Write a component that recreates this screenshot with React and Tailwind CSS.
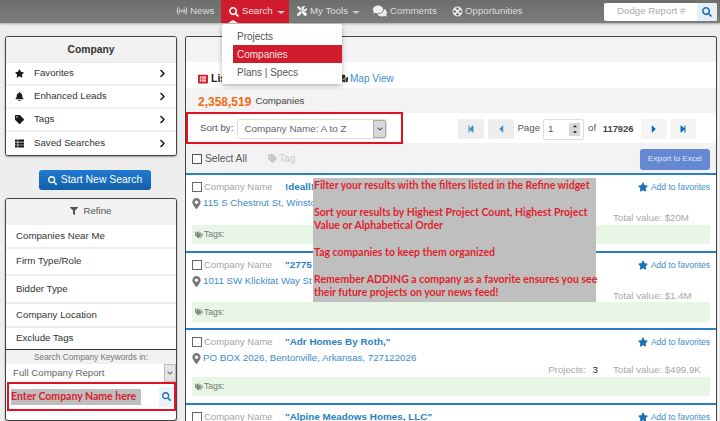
import React from "react";
import { FaStar, FaBell, FaTag, FaTags, FaThList, FaChevronRight, FaSearch, FaMapMarkerAlt, FaTools, FaComments, FaFilter, FaStepBackward, FaStepForward, FaCaretLeft, FaCaretRight, FaCaretDown, FaCaretUp, FaChevronDown, FaMapMarked, FaListAlt } from "react-icons/fa";
import { Radio } from "lucide-react";

const Caret = () => <span className="ml-[4px] inline-block w-0 h-0 border-x-[4px] border-x-transparent border-t-[3px] border-t-[#c9c9c9] translate-y-[1px]" />;

const Reel = () => (
  <svg width="11" height="11" viewBox="0 0 12 12" className="mr-[2px]">
    <circle cx="6" cy="6" r="5.4" fill="#e8e8e8" />
    <circle cx="6" cy="2.9" r="1.3" fill="#666" />
    <circle cx="6" cy="9.1" r="1.3" fill="#666" />
    <circle cx="2.9" cy="6" r="1.3" fill="#666" />
    <circle cx="9.1" cy="6" r="1.3" fill="#666" />
  </svg>
);

function Nav() {
  return (
    <div className="relative h-[23px] shrink-0 flex items-center bg-gradient-to-b from-[#6e6f6d] to-[#7c7d7b] text-[#dcdcdc] text-[9.7px] shadow-[0_1px_2px_rgba(0,0,0,0.3)]">
      <div className="ml-[176px] w-[45px] flex items-center gap-[2px]"><Radio size={12} strokeWidth={2} /><span>News</span></div>
      <div className="relative w-[68px] h-full bg-[#d01c2d] text-[#f4dfe1] flex items-center pl-[8px]">
        <FaSearch size={10} className="text-white mr-[3px]" /><span>Search</span><Caret />
        <span className="absolute left-[7px] bottom-0 w-0 h-0 border-x-[5px] border-x-transparent border-b-[3px] border-b-white" />
      </div>
      <div className="ml-[8px] w-[76px] flex items-center"><FaTools size={10} className="text-white mr-[3px]" /><span>My Tools</span><Caret /></div>
      <div className="w-[79px] flex items-center"><FaComments size={14} className="text-[#f0f0f0] mr-[3px]" /><span>Comments</span></div>
      <div className="flex items-center"><Reel /><span>Opportunities</span></div>
      <div className="ml-auto mr-[3px] w-[113px] h-[18px] bg-white rounded-[2px] flex items-center text-[#aaaaaa]">
        <span className="ml-[13px] flex-1">Dodge Report #</span>
        <span className="w-[20px] h-full bg-[#e6eef6] flex items-center justify-center rounded-r-[2px]"><FaSearch size={10} className="text-[#1a6fb5]" /></span>
      </div>
    </div>
  );
}

function MenuRow({ icon, label }) {
  return (
    <div className="flex items-center h-[23px] pl-[9px] pr-[9px] border-b-2 border-[#f0f0f0] last:border-b-0 bg-white">
      <span className="w-[19px] text-[#1a1a1a]">{icon}</span>
      <span className="flex-1">{label}</span>
      <FaChevronRight size={9} className="text-[#111]" />
    </div>
  );
}

function RefineRow({ label, h }) {
  return <div className={`flex items-center ${h} pl-[10px] border-b-2 border-[#eeeeee] bg-white`}>{label}</div>;
}

function Left() {
  return (
    <div className="w-[172px] shrink-0 flex flex-col">
      <div className="h-[120px] border border-[#444] rounded-[3px] bg-white shadow-[0_1px_2px_rgba(0,0,0,0.35)] text-[9.7px] text-[#333] overflow-hidden">
        <div className="h-[26px] bg-[#f2f2f2] border-b border-[#eaeaea] flex items-center justify-center font-bold text-[10.3px] text-[#333]">Company</div>
        <MenuRow label="Favorites" icon={<FaStar size={9} />} />
        <MenuRow label="Enhanced Leads" icon={<FaBell size={9} />} />
        <MenuRow label="Tags" icon={<FaTag size={9} />} />
        <MenuRow label="Saved Searches" icon={<FaThList size={9} />} />
      </div>
      <div className="h-[20px] w-[112px] mt-[14px] ml-[34px] rounded-[3px] bg-gradient-to-b from-[#1f7bd0] to-[#135fa8] text-white text-[10.4px] font-medium flex items-center justify-center gap-[4px]">
        <FaSearch size={9} /><span>Start New Search</span>
      </div>
      <div className="relative mt-[8px] h-[223px] border border-[#444] rounded-[3px] bg-white shadow-[0_1px_2px_rgba(0,0,0,0.35)] text-[9.7px] text-[#333] overflow-hidden">
        <div className="h-[26px] pb-[2px] bg-[#f2f2f2] flex items-center justify-center gap-[5px] text-[#555]"><FaFilter size={8} /><span>Refine</span></div>
        <RefineRow h="h-[24px]" label="Companies Near Me" />
        <RefineRow h="h-[27px]" label="Firm Type/Role" />
        <RefineRow h="h-[28px]" label="Bidder Type" />
        <RefineRow h="h-[24px]" label="Company Location" />
        <div className="h-[22px] flex items-center pl-[10px] border-b border-[#333]">Exclude Tags</div>
        <div className="h-[14px] bg-[#f1f1f1] flex items-center justify-center text-[8.3px] text-[#777]">Search Company Keywords in:</div>
        <div className="h-[18px] flex items-stretch text-[#666]">
          <span className="flex-1 flex items-center pl-[7px] pt-[1px]">Full Company Report</span>
          <span className="w-[12px] bg-[#e4e4e4] border border-[#bbb] flex items-center justify-center"><FaChevronDown size={6} className="text-[#666]" /></span>
        </div>
        <div className="h-[29px] ml-[1px] border-2 border-[#e21224] flex items-center">
          <span className="ml-[2px] w-[130px] h-[16px] bg-[#bfbfbf] text-[#d81e2c] font-bold text-[10.5px] font-['Lato',sans-serif] flex items-center whitespace-nowrap">Enter Company Name here</span>
          <span className="ml-auto mr-[1px] w-[14px] h-[20px] bg-[#eef3f8] flex items-center justify-center"><FaSearch size={9} className="text-[#1a6fb5]" /></span>
        </div>
      </div>
    </div>
  );
}

function Card({ h, name, addr, projects, value, vt, tagsH, tagsMt }) {
  return (
    <div className={`${h} shrink-0 border-t-2 border-[#2a7fc4] px-[6px] bg-white overflow-hidden`}>
      <div className="flex items-center h-[20px] mt-[2px]">
        <span className="w-[10px] h-[10px] border border-[#666] bg-white mr-[2px]" />
        <span className="w-[81px] text-[9.5px] text-[#a5a5a5]">Company Name</span>
        <span className="text-[#2a7fc4] font-bold text-[9.9px]">{name}</span>
        <span className="ml-auto flex items-center gap-[3px] text-[#3c8dcc] text-[8.5px]"><FaStar size={10} className="text-[#1a6fb5]" />Add to favorites</span>
      </div>
      {addr && (
        <>
          <div className="flex items-center h-[13px] gap-[1px] text-[#3c8dcc] text-[9.7px] whitespace-nowrap">
            <FaMapMarkerAlt size={11} className="-ml-[1px] text-[#777]" /><span>{addr}</span>
          </div>
          <div className={`${vt} flex justify-end items-center h-[14px] text-[9.7px] text-[#a8a8a8]`}>
            {projects && <span className="mr-[15px]">Projects: <span className="ml-[4px] text-[#222]">{projects}</span></span>}
            <span className="w-[97px]">Total value: {value}</span>
          </div>
          <div className={`${tagsH} ${tagsMt} bg-[#e8f6e6] flex items-center text-[8.5px] text-[#777] pl-[3px] gap-[1px]`}>
            <FaTags size={8} className="text-[#888]" />Tags:
          </div>
        </>
      )}
    </div>
  );
}

function PageBtn({ children, cls }) {
  return <span className={`w-[26px] h-[20px] rounded-[3px] flex items-center justify-center ${cls}`}>{children}</span>;
}

function Right() {
  return (
    <div className="relative ml-[8px] w-[532px] h-[390px] border border-[#444] border-b-0 rounded-t-[3px] bg-white flex flex-col overflow-hidden text-[#444]">
      <div className="h-[25px] shrink-0 bg-[#f3f3f3]" />
      <div className="h-[26px] shrink-0 flex items-center pl-[12px] pt-[7px] text-[10.5px]">
        <FaListAlt size={10} className="text-[#d01c2d] mr-[3px]" /><span className="font-bold text-[#222] w-[128px]">List View</span>
        <FaMapMarked size={9} className="text-[#333] mr-[2px]" /><span className="text-[#3c8dcc] text-[10px]">Map View</span>
      </div>
      <div className="h-[25px] shrink-0 bg-[#f3f3f3] flex items-center pl-[12px] pt-[2px] text-[9.7px]">
        <span className="text-[#f26a11] font-bold text-[12px] mr-[4px]">2,358,519</span>Companies
      </div>
      <div className="h-[30px] shrink-0 flex items-center pt-[2px] text-[9.7px] text-[#555]">
        <span className="ml-[14px] -mt-[1px]">Sort by:</span>
        <div className="ml-[4px] w-[150px] h-[20px] border border-[#ddd] rounded-[3px] flex items-center justify-between text-[#666]">
          <span className="ml-[6px] text-[9.9px]">Company Name: A to Z</span>
          <span className="w-[13px] h-full bg-[#d8d8d8] border border-[#aaa] rounded-r-[2px] flex items-center justify-center"><FaChevronDown size={6} className="text-[#555]" /></span>
        </div>
        <div className="ml-[71px] flex items-center">
          <PageBtn cls="bg-[#eeeeee] text-[#4a92c6]"><FaStepBackward size={8} /></PageBtn>
          <PageBtn cls="ml-[4px] bg-[#eeeeee] text-[#4a92c6]"><FaCaretLeft size={12} /></PageBtn>
          <span className="ml-[3px] -mt-[1px]">Page</span>
          <span className="ml-[3px] w-[41px] h-[21px] border border-[#ddd] rounded-[2px] flex items-center justify-between pl-[4px] pr-[3px] text-[#555]">1
            <span className="w-[11px] h-[13px] bg-[#d8d8d8] flex flex-col items-center justify-center text-[#222]"><FaCaretUp size={6} /><FaCaretDown size={6} /></span>
          </span>
          <span className="ml-[4px] -mt-[1px]">of</span>
          <span className="ml-[2px] w-[40px] text-center font-bold text-[#444] text-[9.4px]">117926</span>
          <PageBtn cls="ml-[3px] bg-[#f5f5f5] text-[#0f6bb0]"><FaCaretRight size={12} /></PageBtn>
          <PageBtn cls="ml-[3px] bg-[#f5f5f5] text-[#0f6bb0]"><FaStepForward size={8} /></PageBtn>
        </div>
      </div>
      <div className="h-[30px] shrink-0 bg-[#f3f3f3] flex items-center pl-[6px] pr-[6px] pt-[2px] text-[10.2px] text-[#555]">
        <span className="w-[10px] h-[10px] border border-[#555] bg-white mr-[3px]" />Select All
        <span className="ml-[21px] flex items-center gap-[2px] text-[#c8c8c8]"><FaTag size={9} />Tag</span>
        <span className="ml-auto w-[70px] h-[21px] rounded-[3px] bg-[#6488d2] text-[#e2e8f5] text-[8px] flex items-center justify-center">Export to Excel</span>
      </div>
      <Card h="h-[78px]" name="!deall!" addr="115 S Chestnut St, Winston Salem" value="$20M" vt="mt-[1px]" tagsH="h-[19px]" tagsMt="" />
      <Card h="h-[77px]" name='"2775' addr="1011 SW Klickitat Way St" value="$1.4M" vt="mt-[1px]" tagsH="h-[20px]" tagsMt="-mt-[1px]" />
      <Card h="h-[75px]" name='"Adr Homes By Roth,"' addr="PO BOX 2026, Bentonville, Arkansas, 727122026" value="$499.9K" projects="3" vt="-mt-[2px]" tagsH="h-[19px]" tagsMt="" />
      <Card h="h-[40px]" name='"Alpine Meadows Homes, LLC"' />
    </div>
  );
}

export default function App() {
  return (
    <div className="relative w-[720px] h-[421px] overflow-hidden bg-[#eeeeee] font-['Liberation_Sans',Arial,sans-serif] flex flex-col">
      <Nav />
      <div className="flex pl-[5px] pt-[13px]">
        <Left />
        <Right />
      </div>

      <div className="absolute left-[222px] top-[24px] w-[120px] h-[60px] bg-white rounded-[2px] shadow-[0_2px_5px_rgba(0,0,0,0.3)] text-[10px] text-[#555] pt-[3px]">
        <div className="h-[18px] flex items-center pl-[15px] pt-[1px]">Projects</div>
        <div className="h-[18px] ml-[11px] bg-[#d01c2d] text-[#f6e2e4] flex items-center pl-[4px] pt-[1px]">Companies</div>
        <div className="h-[18px] flex items-center pl-[15px] pt-[1px]">Plans | Specs</div>
      </div>

      <div className="absolute left-[186px] top-[112px] w-[217px] h-[32px] border-2 border-[#e21224]" />

      <div className="absolute left-[313px] top-[178px] w-[283px] h-[124px] bg-[#bfbfbf] text-[#e01f2e] font-bold text-[10.5px] leading-[13.4px] font-['Lato',sans-serif] pl-[1px] pt-[1px] whitespace-nowrap">
        <p>Filter your results with the filters listed in the Refine widget</p>
        <p className="mt-[13.4px]">Sort your results by Highest Project Count, Highest Project<br />Value or Alphabetical Order</p>
        <p className="mt-[13.4px]">Tag companies to keep them organized</p>
        <p className="mt-[13.4px]">Remember ADDING a company as a favorite ensures you see<br />their future projects on your news feed!</p>
      </div>
    </div>
  );
}
